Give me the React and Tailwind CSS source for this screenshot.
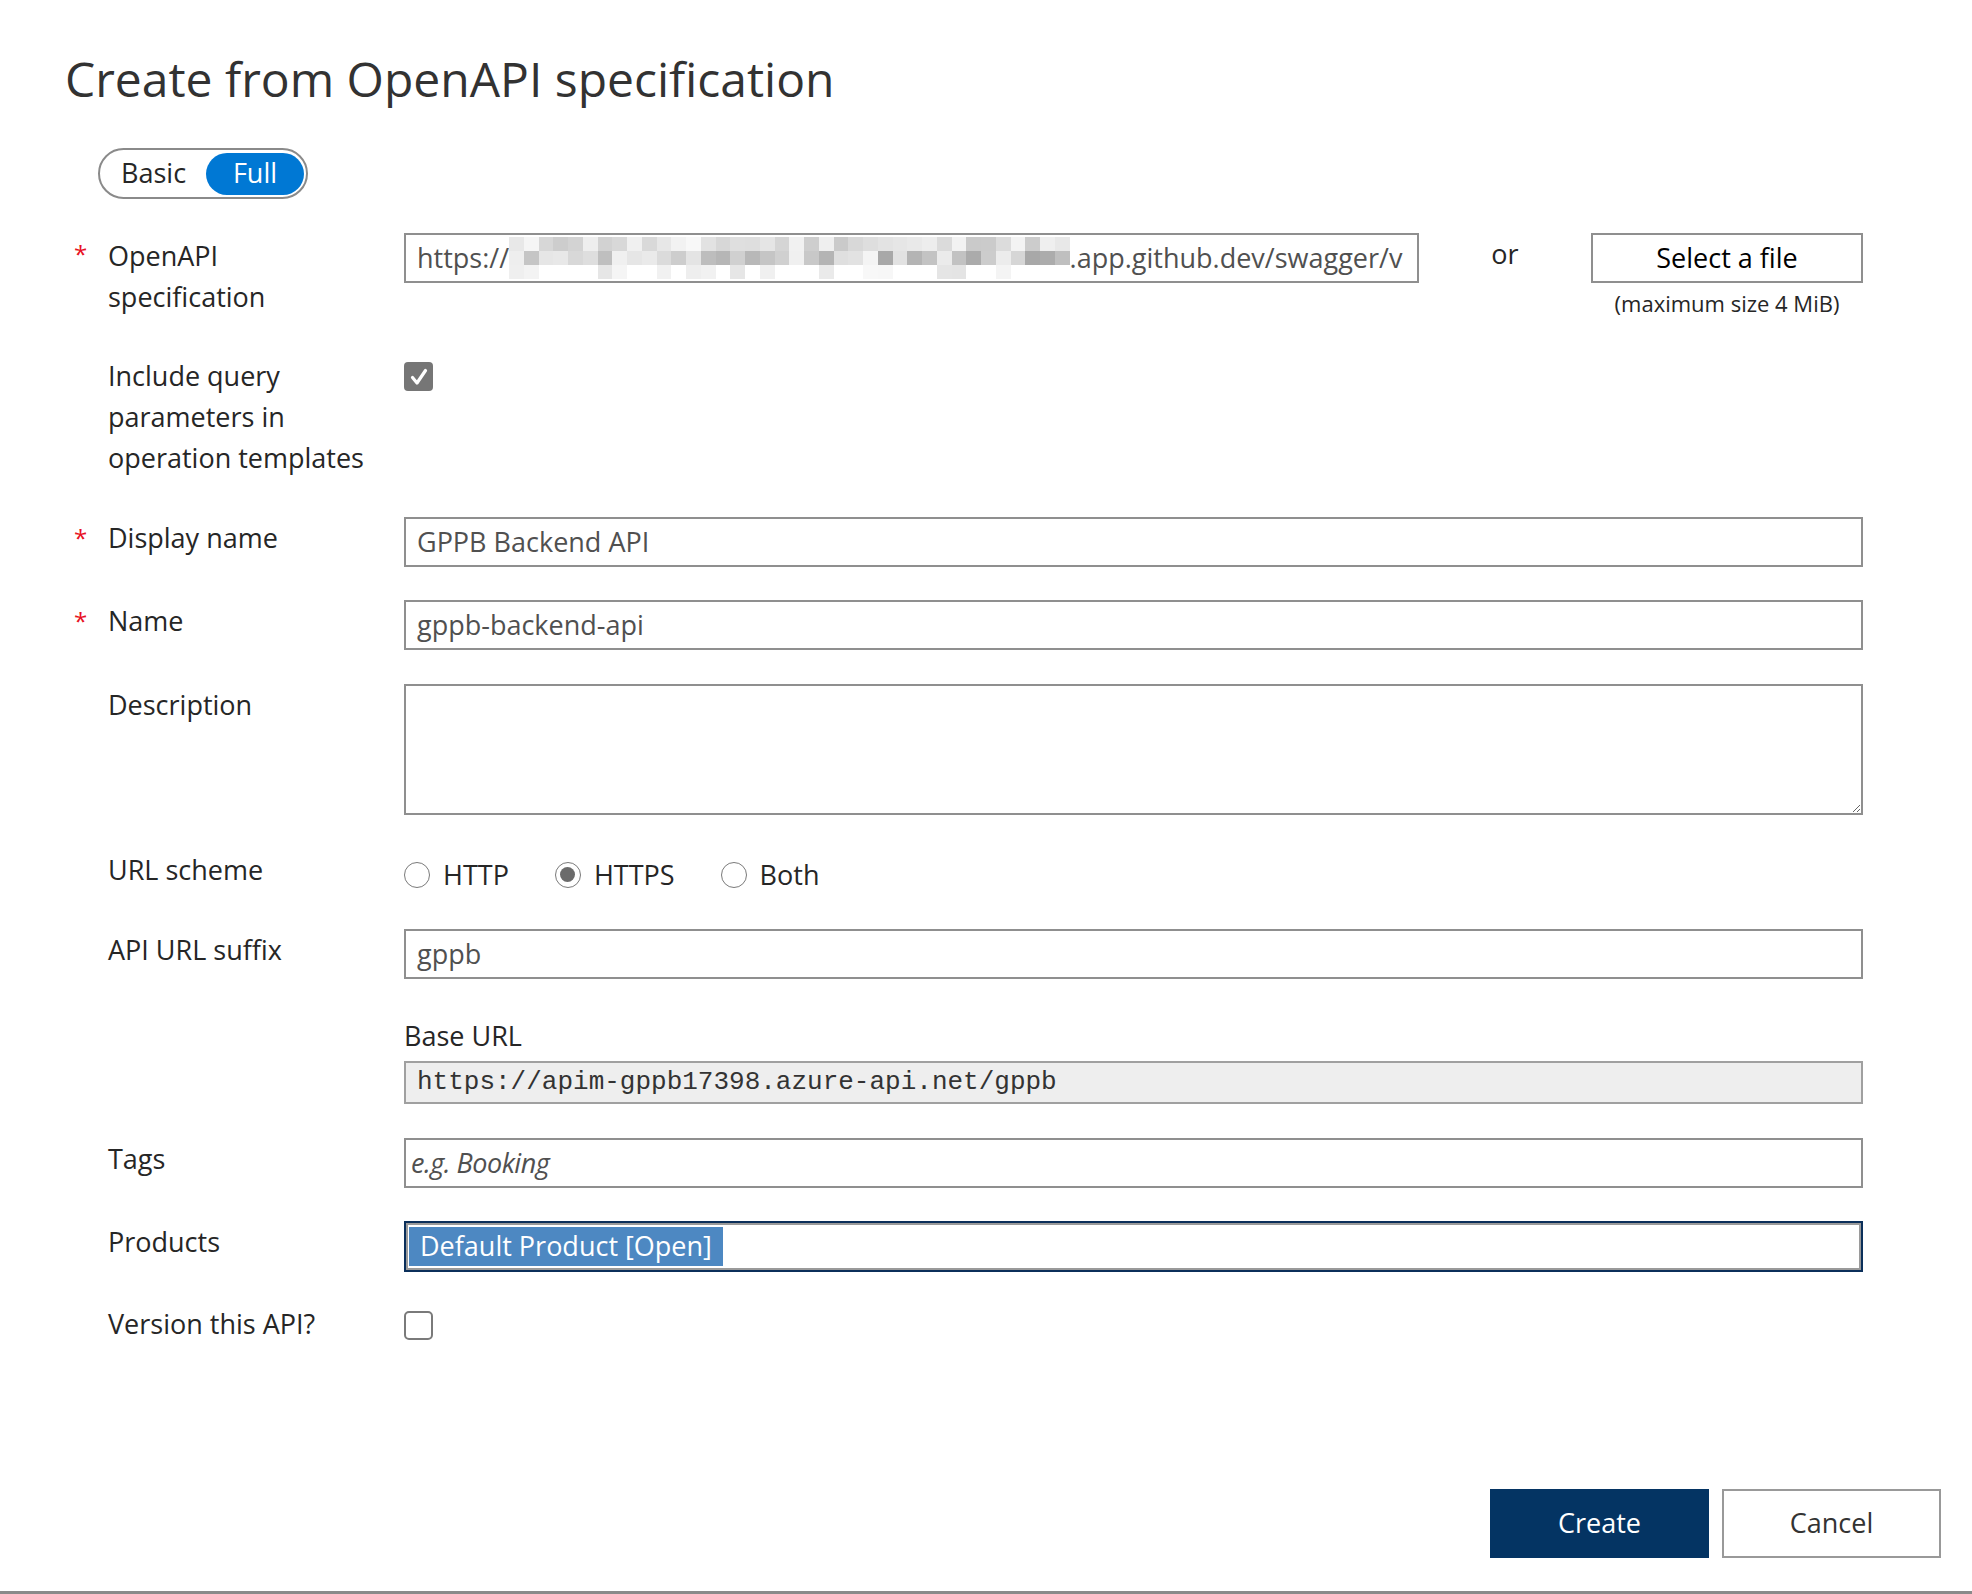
import React from 'react'

// pseudo-random grey tiles for the masked part of the url
let seed = 11
const rnd = () => {
  seed = (seed * 9301 + 49297) % 233280
  return seed / 233280
}
const tileRows = [
  Array.from({ length: 38 }, () => Math.round(200 + rnd() * 50)),
  Array.from({ length: 38 }, () => Math.round(165 + rnd() * 85)),
  Array.from({ length: 38 }, () => (rnd() > 0.65 ? Math.round(228 + rnd() * 22) : 255)),
]

function MaskedTiles() {
  return (
    <div className="flex flex-col shrink-0">
      {tileRows.map((row, i) => (
        <div key={i} className="flex">
          {row.map((v, j) => (
            <span
              key={j}
              className="block w-[14.75px] h-[14px]"
              style={{ background: `rgb(${v},${v},${v})` }}
            />
          ))}
        </div>
      ))}
    </div>
  )
}

function Row({ required, label, className = '', children }) {
  return (
    <div className={`flex items-start ${className}`}>
      <div className="w-[43px] shrink-0 pl-[9px] text-[24px] leading-[41px] text-[#e81123]">
        {required ? '*' : ''}
      </div>
      <div className="w-[296px] shrink-0 text-[27px] leading-[41px] text-[#262626]">{label}</div>
      <div className="flex-1">{children}</div>
    </div>
  )
}

function TextBox({ children, className = '', pad = 'pl-[11px]' }) {
  return (
    <div
      className={`h-[50px] border-2 border-[#8f8f8f] bg-white flex items-center ${pad} text-[27px] text-[#505050] overflow-hidden whitespace-nowrap ${className}`}
    >
      {children}
    </div>
  )
}

function Radio({ checked, label }) {
  return (
    <div className="flex items-center gap-[13px]">
      <span className="w-[26px] h-[26px] rounded-full border-[1.5px] border-[#7a7a7a] bg-white flex items-center justify-center">
        {checked && <span className="w-[15px] h-[15px] rounded-full bg-[#6b6b6b]" />}
      </span>
      <span className="text-[27px] leading-[41px] text-[#262626]">{label}</span>
    </div>
  )
}

export default function App() {
  return (
    <div className="w-[1972px] h-[1594px] bg-white overflow-hidden flex flex-col font-['Open_Sans',sans-serif]">
      <h1 className="pl-[65px] pt-[49px] text-[48px] leading-[60px] text-[#323232] font-normal">
        Create from OpenAPI specification
      </h1>

      <div className="ml-[98px] mt-[39px] w-[210px] h-[51px] rounded-full border-2 border-[#8a8a8a] flex items-center">
        <span className="pl-[21px] w-[106px] text-[27px] text-[#262626]">Basic</span>
        <span className="w-[98px] h-[42px] rounded-full bg-[#0078d4] text-white text-[27px] flex items-center justify-center">
          Full
        </span>
      </div>

      <div className="ml-[65px] w-[1798px] flex flex-col">
        <Row required label={<div className="pt-[2px]">OpenAPI<br />specification</div>} className="mt-[34px]">
          <div className="flex items-start">
            <TextBox className="w-[1015px] shrink-0">
              <span>https://</span>
              <MaskedTiles />
              <span>.app.github.dev/swagger/v</span>
            </TextBox>
            <div className="w-[172px] text-center text-[27px] leading-[41px] text-[#262626]">or</div>
            <div className="w-[272px] flex flex-col items-center">
              <div className="w-full h-[50px] border-2 border-[#8f8f8f] flex items-center justify-center text-[27px] text-black">
                Select a file
              </div>
              <div className="mt-[5px] text-[22px] leading-[30px] text-[#262626]">(maximum size 4 MiB)</div>
            </div>
          </div>
        </Row>

        <Row label={<>Include query<br />parameters in<br />operation templates</>} className="mt-[37px]">
          <div className="mt-[7px] w-[29px] h-[29px] rounded-[4px] bg-[#767676] flex items-center justify-center">
            <svg width="22" height="22" viewBox="0 0 22 22" fill="none">
              <path d="M4.5 11.5 L9 17 L17.5 4.5" stroke="white" strokeWidth="3.2" strokeLinecap="round" strokeLinejoin="round" />
            </svg>
          </div>
        </Row>

        <Row required label="Display name" className="mt-[39px]">
          <TextBox>GPPB Backend API</TextBox>
        </Row>

        <Row required label="Name" className="mt-[33px]">
          <TextBox>gppb-backend-api</TextBox>
        </Row>

        <Row label="Description" className="mt-[34px]">
          <textarea
            className="block w-full h-[131px] border-2 border-[#8f8f8f] bg-white outline-none"
            defaultValue=""
          />
        </Row>

        <Row label="URL scheme" className="mt-[34px]">
          <div className="pt-[5px] flex items-center gap-[46px]">
            <Radio label="HTTP" />
            <Radio checked label="HTTPS" />
            <Radio label="Both" />
          </div>
        </Row>

        <Row label="API URL suffix" className="mt-[34px]">
          <TextBox>gppb</TextBox>
        </Row>

        <Row label="" className="mt-[36px]">
          <div className="text-[27px] leading-[41px] text-[#262626]">Base URL</div>
          <div className="mt-[5px] h-[43px] border-2 border-[#a0a0a0] bg-[#eeeeee] flex items-center pl-[11px] text-[26px] text-[#333] font-['Liberation_Mono',monospace]">
            https://apim-gppb17398.azure-api.net/gppb
          </div>
        </Row>

        <Row label="Tags" className="mt-[34px]">
          <TextBox className="h-[48px]" pad="pl-[5px]">
            <span className="italic text-[#505050] tracking-[-0.5px]">e.g. Booking</span>
          </TextBox>
        </Row>

        <Row label="Products" className="mt-[33px]">
          <div className="h-[51px] border-2 border-[#0b2f5a]">
            <div className="h-full border-2 border-[#9a9a9a] bg-white flex items-center">
              <span className="ml-[1px] h-[39px] px-[11px] bg-[#4d88c2] text-white text-[27px] flex items-center">
                Default Product [Open]
              </span>
            </div>
          </div>
        </Row>

        <Row label="Version this API?" className="mt-[31px]">
          <div className="mt-[8px] w-[29px] h-[29px] rounded-[5px] border-2 border-[#7a7a7a] bg-white" />
        </Row>
      </div>

      <div className="mt-auto flex justify-end gap-[13px] pr-[31px]">
        <button className="w-[219px] h-[69px] bg-[#043463] text-white text-[27px]">Create</button>
        <button className="w-[219px] h-[69px] border-2 border-[#999] bg-white text-[#333] text-[27px]">Cancel</button>
      </div>
      <div className="mt-[33px] h-[3px] bg-[#8a8a8a]" />
    </div>
  )
}
